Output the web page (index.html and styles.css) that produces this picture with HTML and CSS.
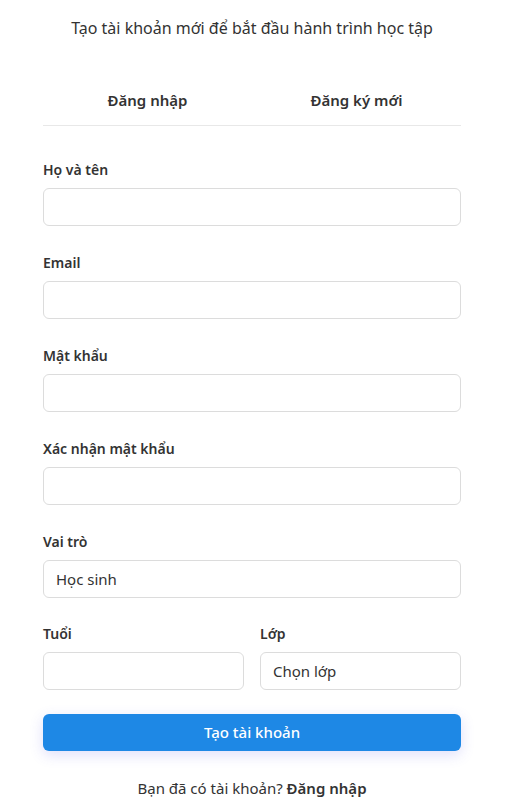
FILE: index.html
```html
<!DOCTYPE html>
<html lang="vi">
<head>
<meta charset="utf-8">
<link rel="stylesheet" href="styles.css">
</head>
<body>
<div class="page">
  <p class="subtitle">Tạo tài khoản mới để bắt đầu hành trình học tập</p>
  <div class="tabs">
    <div class="tab">Đăng nhập</div>
    <div class="tab">Đăng ký mới</div>
  </div>
  <form class="form">
    <div class="field">
      <label class="label">Họ và tên</label>
      <div class="input"></div>
    </div>
    <div class="field">
      <label class="label">Email</label>
      <div class="input"></div>
    </div>
    <div class="field">
      <label class="label">Mật khẩu</label>
      <div class="input"></div>
    </div>
    <div class="field">
      <label class="label">Xác nhận mật khẩu</label>
      <div class="input"></div>
    </div>
    <div class="field">
      <label class="label">Vai trò</label>
      <div class="input">Học sinh</div>
    </div>
    <div class="row">
      <div class="field">
        <label class="label">Tuổi</label>
        <div class="input"></div>
      </div>
      <div class="field">
        <label class="label">Lớp</label>
        <div class="input">Chọn lớp</div>
      </div>
    </div>
    <div class="button">Tạo tài khoản</div>
  </form>
  <p class="footer">Bạn đã có tài khoản? <b>Đăng nhập</b></p>
</div>
</body>
</html>
```
FILE: styles.css
```css
html, body { margin: 0; padding: 0; background: #fff; }
body {
  font-family: "Noto Sans", "Open Sans", sans-serif;
  color: #222;
}
.page {
  width: 418px;
  margin-left: 43px;
  padding-top: 16px;
}
.subtitle {
  margin: 0;
  text-align: center;
  font-size: 16px;
  line-height: 24px;
  color: #333;
}
.tabs {
  display: flex;
  margin-top: 49px;
  border-bottom: 1px solid #e8e8e8;
}
.tab {
  flex: 1;
  text-align: center;
  font-size: 15px;
  font-weight: 600;
  line-height: 22px;
  padding-bottom: 14px;
  color: #333;
}
.form {
  display: flex;
  flex-direction: column;
  gap: 27px;
  margin-top: 34px;
}
.field {
  display: flex;
  flex-direction: column;
  gap: 8px;
}
.label {
  font-size: 14px;
  font-weight: 600;
  line-height: 20px;
  color: #333;
}
.input {
  height: 36px;
  border: 1px solid #dcdcdc;
  border-radius: 6px;
  padding: 0 12px;
  font-size: 15px;
  line-height: 36px;
  color: #333;
}
.row {
  display: grid;
  grid-template-columns: 1fr 1fr;
  gap: 16px;
  margin-top: -1px;
}
.button {
  margin-top: -3px;
  height: 37px;
  background: #1e88e5;
  border-radius: 6px;
  color: #fff;
  font-size: 15px;
  font-weight: 500;
  line-height: 37px;
  text-align: center;
  box-shadow: 0 4px 14px rgba(80, 80, 230, 0.18);
}
.footer {
  margin: 26px 0 0;
  text-align: center;
  font-size: 15px;
  line-height: 22px;
  color: #333;
}
.footer b { font-weight: 600; }
```
